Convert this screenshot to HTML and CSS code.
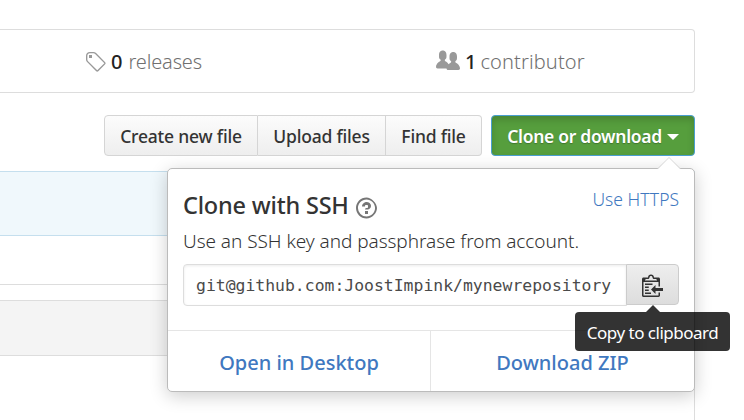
FILE: index.html
```
<!DOCTYPE html>
<html lang="en">
<head>
<meta charset="utf-8">
<title>Repository</title>
<link rel="stylesheet" href="styles.css">
</head>
<body>
<main class="page">
  <section class="stats">
    <div class="stat releases">
      <svg class="icon tag" viewBox="0 0 14 16" width="21" height="24"><path d="M6.73 2.73c-.47-.47-1.11-.73-1.77-.73H2.5C1.13 2 0 3.13 0 4.5v2.47c0 .66.27 1.3.73 1.77l6.06 6.06c.39.39 1.02.39 1.41 0l4.59-4.59a.996.996 0 0 0 0-1.41L6.73 2.73zM1.38 8.09c-.31-.3-.47-.7-.47-1.13V4.5c0-.88.72-1.59 1.59-1.59h2.47c.42 0 .83.16 1.13.47l6.14 6.13-4.73 4.73-6.13-6.15zM2.01 4h2v2H2V4h.01z"/></svg>
      <b>0</b><span>releases</span>
    </div>
    <div class="stat contributors">
      <svg class="icon" viewBox="0 0 16 16" width="24" height="24"><path d="M16 12.999c0 .439-.45 1-1 1H7.995c-.539 0-.994-.447-.995-.999H1c-.54 0-1-.561-1-1 0-2.634 3-4 3-4s.229-.409 0-1c-.841-.621-1.058-.59-1-3 .058-2.419 1.367-3 2.5-3s2.442.58 2.5 3c.058 2.41-.159 2.379-1 3-.229.59 0 1 0 1s1.549.711 2.42 2.088C9.196 9.369 10 8.999 10 8.999s.229-.409 0-1c-.841-.62-1.058-.59-1-3 .058-2.419 1.367-3 2.5-3s2.437.581 2.495 3c.059 2.41-.158 2.38-1 3-.229.59 0 1 0 1s3.005 1.366 3.005 4"/></svg>
      <b>1</b><span>contributor</span>
    </div>
  </section>

  <nav class="actions">
    <div class="group">
      <button class="btn create">Create new file</button>
      <button class="btn upload">Upload files</button>
      <button class="btn find">Find file</button>
    </div>
    <div class="clone">
      <button class="btn primary"><span>Clone or download</span><i class="caret"></i></button>
      <div class="popover">
        <div class="pop-body">
          <div class="pop-head">
            <h4>Clone with SSH</h4>
            <svg class="help" viewBox="0 0 14 16" width="21" height="24"><path d="M6 10h2v2H6v-2zm4-3.5C10 8.64 8 9 8 9H6c0-.55.45-1 1-1h.5c.28 0 .5-.22.5-.5v-1c0-.28-.22-.5-.5-.5h-1c-.28 0-.5.22-.5.5V7H4c0-1.5 1.5-3 3-3s3 1 3 2.5zM7 2.3c3.14 0 5.7 2.56 5.7 5.7s-2.56 5.7-5.7 5.7A5.71 5.71 0 0 1 1.3 8c0-3.14 2.56-5.7 5.7-5.7zM7 1C3.14 1 0 4.14 0 8s3.14 7 7 7 7-3.86 7-7-3.86-7-7-7z"/></svg>
            <a class="switch">Use HTTPS</a>
          </div>
          <p>Use an SSH key and passphrase from account.</p>
          <div class="url">
            <div class="field">git@github.com:JoostImpink/mynewrepository</div>
            <button class="copy" aria-label="Copy to clipboard">
              <svg viewBox="0 0 14 16" width="21" height="24"><path d="M2 13h4v1H2v-1zm5-6H2v1h5V7zm2 3V8l-3 3 3 3v-2h5v-2H9zM4.5 9H2v1h2.5V9zM2 12h2.5v-1H2v1zm9 1h1v2c-.02.28-.11.52-.3.7-.19.18-.42.28-.7.3H1c-.55 0-1-.45-1-1V4c0-.55.45-1 1-1h3c0-1.11.89-2 2-2 1.11 0 2 .89 2 2h3c.55 0 1 .45 1 1v5h-1V6H1v9h10v-2zM2 5h8c0-.55-.45-1-1-1H8c-.55 0-1-.45-1-1s-.45-1-1-1-1 .45-1 1-.45 1-1 1H3c-.55 0-1 .45-1 1z"/></svg>
            </button>
            <div class="tooltip"><span>Copy to clipboard</span></div>
          </div>
        </div>
        <div class="pop-foot">
          <a class="desktop">Open in Desktop</a>
          <a class="zip">Download ZIP</a>
        </div>
      </div>
    </div>
  </nav>

  <section class="commit"></section>
  <section class="files"></section>
  <section class="readme"><header></header></section>
</main>
</body>
</html>
```

FILE: styles.css
```
* { box-sizing: border-box; }
body {
  margin: 0;
  height: 420px;
  overflow: hidden;
  background: #fff;
  color: #333;
  font-family: "Noto Sans", "Open Sans", sans-serif;
}
.page { width: 695px; padding-top: 29px; }
button { font: inherit; color: inherit; padding: 0; }

.stats {
  display: flex;
  height: 64px;
  border: 1px solid #ddd;
  border-left: 0;
  border-radius: 0 4px 4px 0;
}
.stat {
  display: flex;
  align-items: center;
  font-size: 20px;
  color: #707070;
  white-space: nowrap;
}
.stat b { color: #222; font-weight: 500; }
.stat span { font-weight: 350; letter-spacing: -.15px; }
.stat svg { margin-bottom: 1px; }
.icon { fill: #999; }
.releases { width: 350px; padding-left: 86px; }
.releases b { margin: 0 6px 0 4px; }
.contributors { padding-left: 86px; }
.contributors svg { margin-bottom: 0; }
.contributors b { margin: 0 4px 0 5px; }
.contributors span { letter-spacing: .12px; }

.actions { display: flex; height: 41px; margin-top: 22px; padding-left: 104px; }
.group { display: flex; width: 378px; margin-right: 9px; }
.btn {
  height: 41px;
  border: 1px solid #d5d5d5;
  background: linear-gradient(#fcfcfc, #eee);
  font-size: 17.5px;
  font-weight: 500;
  letter-spacing: -.2px;
  white-space: nowrap;
}
.create { width: 154px; border-radius: 4px 0 0 4px; }
.upload { width: 128px; border-left: 0; }
.find { width: 96px; border-left: 0; border-radius: 0 4px 4px 0; }
.clone { position: relative; width: 204px; }
.primary {
  display: flex;
  align-items: center;
  justify-content: center;
  gap: 5px;
  width: 204px;
  border-color: #4a9fd0;
  border-radius: 4px;
  background: #569e3d;
  box-shadow: inset 0 4px 7px rgba(0, 0, 0, .15);
  color: #fff;
  font-weight: 600;
  letter-spacing: -.3px;
  text-shadow: 0 1px 1px rgba(0, 0, 0, .25);
}
.caret {
  margin-top: 2px;
  border: 6px solid transparent;
  border-top-color: #fff;
  border-bottom: 0;
}

.popover {
  position: absolute;
  z-index: 2;
  top: 53px;
  right: 0;
  width: 528px;
  height: 224px;
  border: 1px solid #bbb;
  border-radius: 5px;
  background: #fff;
  box-shadow: 0 4px 18px rgba(0, 0, 0, .2);
}
.popover::before {
  content: "";
  position: absolute;
  top: -12px;
  right: 13px;
  width: 24px;
  height: 12px;
  background: linear-gradient(#ddd, #ccc);
  clip-path: polygon(50% 0, 100% 100%, 0 100%);
}
.popover::after {
  content: "";
  position: absolute;
  top: -11px;
  right: 14px;
  width: 22px;
  height: 11px;
  background: #fff;
  clip-path: polygon(50% 0, 100% 100%, 0 100%);
}
.pop-body { height: 161px; padding: 14px 15px 0; }
.pop-head { display: flex; height: 42px; }
h4 { width: 173px; margin: 6px 0 0; font-size: 23.5px; line-height: 32px; font-weight: 500; letter-spacing: -.2px; white-space: nowrap; }
.help { margin-top: 13px; fill: #767676; }
.switch {
  margin: 3px 0 0 auto;
  font-size: 17.5px;
  line-height: 27px;
  font-weight: 350;
}
a { color: #4078c0; }
p { margin: 3px 0 9px; font-size: 19px; line-height: 27px; font-weight: 350; letter-spacing: -.05px; white-space: nowrap; }
.url { position: relative; display: flex; }
.field {
  width: 444px;
  height: 42px;
  padding-left: 12px;
  border: 1px solid #ddd;
  border-radius: 4px 0 0 4px;
  box-shadow: inset 0 1px 3px rgba(0, 0, 0, .08);
  color: #4a4a4a;
  font: 16.43px/41px "DejaVu Sans Mono", monospace;
  white-space: nowrap;
}
.copy {
  display: flex;
  align-items: center;
  justify-content: center;
  width: 53px;
  height: 41px;
  margin-left: -1px;
  border: 1px solid #ccc;
  border-radius: 0 4px 4px 0;
  background: linear-gradient(#eee, #ddd);
}
.copy svg { fill: #333; }
.tooltip {
  position: absolute;
  top: 48px;
  left: 392px;
  width: 155px;
  height: 39px;
  border-radius: 4px;
  background: rgba(0, 0, 0, .8);
  color: #fff;
  font-size: 17px;
  letter-spacing: -.5px;
  line-height: 41px;
  text-align: center;
  white-space: nowrap;
}
.tooltip::before {
  content: "";
  position: absolute;
  top: -7px;
  left: 71px;
  border: 7px solid transparent;
  border-top: 0;
  border-bottom-color: rgba(0, 0, 0, .8);
}
.pop-foot {
  display: flex;
  height: 61px;
  border-top: 1px solid #e5e5e5;
  font-size: 20px;
  line-height: 63px;
  font-weight: 500;
  text-align: center;
}
.desktop { width: 263px; border-right: 1px solid #e5e5e5; }
.zip { flex: 1; }

.commit {
  height: 65px;
  margin-top: 15px;
  border: 1px solid #c5dfee;
  border-left: 0;
  background: #f0f8fc;
}
.files { height: 49px; border: 1px solid #ddd; border-width: 0 1px 1px 0; }
.readme { height: 130px; margin-top: 15px; border: 1px solid #ddd; border-left: 0; }
.readme header { height: 55px; border-bottom: 1px solid #ddd; background: #f4f4f4; }
```
